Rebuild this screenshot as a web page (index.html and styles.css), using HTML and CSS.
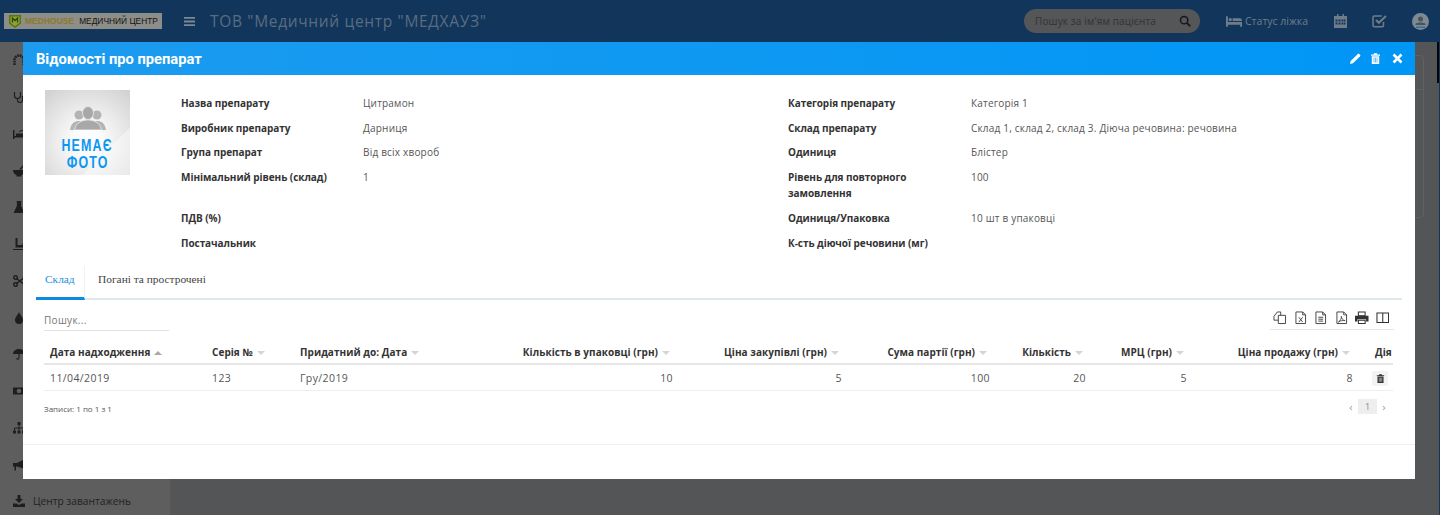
FILE: index.html
```html
<!DOCTYPE html>
<html lang="uk">
<head>
<meta charset="utf-8">
<title>Відомості про препарат</title>
<link rel="stylesheet" href="styles.css">
</head>
<body>
<div class="app">
  <header class="topbar">
    <div class="logo">
      <svg class="logo-mark" viewBox="1 1 12 13"><path d="M1 1h12v8.500l-6 4.500-6-4.500z" fill="#4f7a10"/><path d="M2.500 2.500h9v6.300l-4.500 3.400-4.500-3.400z" fill="#94a030"/><path d="M4.500 8.500V4l2.500 2.500L9.500 4v4.500" fill="none" stroke="#2c4a0c" stroke-width="1.300"/></svg>
      <span class="logo-brand">MEDHOUSE</span>
      <span class="logo-sub">МЕДИЧНИЙ ЦЕНТР</span>
    </div>
    <svg class="burger" viewBox="0 0 11 9"><path d="M0 0h11v1.800H0zM0 3.600h11v1.800H0zM0 7.200h11V9H0z" fill="#7b8895"/></svg>
    <div class="org">ТОВ "Медичний центр "МЕДХАУЗ"</div>
    <div class="pill">
      <span class="pill-text">Пошук за ім'ям пацієнта</span>
      <svg class="pill-icon" viewBox="0 0 14 14"><circle cx="6" cy="6" r="4.300" fill="none" stroke="#14181c" stroke-width="1.800"/><path d="M9.200 9.200L13 13" stroke="#14181c" stroke-width="2.200"/></svg>
    </div>
    <div class="status">
      <svg class="bed" viewBox="0 0 17 11"><path d="M0 0h2v6h15v5h-2V9H2v2H0z" fill="#6f7d8a"/><circle cx="4.500" cy="3.500" r="1.800" fill="#6f7d8a"/><path d="M7 2h7.500A2.500 2.500 0 0 1 17 4.500V5H7z" fill="#6f7d8a"/></svg>
      <span>Статус ліжка</span>
    </div>
    <svg class="cal" viewBox="0 0 13 14"><path d="M0 2h13v12H0z" fill="#6f7d8a"/><path d="M3 0h1.500v3H3zM8.500 0H10v3H8.500z" fill="#6f7d8a"/><path d="M1.500 5.500h2v2h-2zM4.500 5.500h2v2h-2zM7.500 5.500h2v2h-2zM10 5.500h1.500v2H10zM1.500 8.500h2v2h-2zM4.500 8.500h2v2h-2zM7.500 8.500h2v2h-2zM10 8.500h1.500v2H10z" fill="#12355b"/></svg>
    <svg class="chk" viewBox="0 0 15 14"><path d="M11.500 8v3.500a1.200 1.200 0 0 1-1.200 1.200H2.200A1.200 1.200 0 0 1 1 11.500V3.200A1.200 1.200 0 0 1 2.200 2h7.500" fill="none" stroke="#6f7d8a" stroke-width="1.500"/><path d="M4 6l2.800 2.800L14 2" fill="none" stroke="#6f7d8a" stroke-width="2"/></svg>
    <svg class="avatar" viewBox="0 0 17 17"><circle cx="8.500" cy="8.500" r="8.500" fill="#7c8a94"/><circle cx="8.500" cy="6" r="2.500" fill="#4d5358"/><path d="M3.500 11c1-2 9-2 10 0v1h-10z" fill="#4d5358"/><path d="M4 13.500h9V15H4z" fill="#3a6f9a"/></svg>
  </header>
  <div class="main">
    <nav class="sidebar">
      <div class="nav-item"><svg class="nav-icon" viewBox="0 0 12 12"><path d="M1.500 11V6a4.500 4.500 0 0 1 9 0v5" fill="none" stroke="#1e1e1e" stroke-width="2.400" stroke-dasharray="1.800 .7"/></svg></div>
      <div class="nav-item"><svg class="nav-icon" viewBox="0 0 12 12"><path d="M1.500 1v3.500a3 3 0 0 0 6 0V1M4.500 7.500V9a2.500 2.500 0 0 0 5 0V7" fill="none" stroke="#1e1e1e" stroke-width="1.200"/><circle cx="10" cy="6" r="1.300" fill="#1e1e1e"/></svg></div>
      <div class="nav-item"><svg class="nav-icon" viewBox="0 0 12 12"><path d="M0 2h1.500v6H12v3h-1.500V9.500h-9V11H0z" fill="#1e1e1e"/><path d="M3 5.500h8V8H3z" fill="#1e1e1e"/><path d="M6 3.500l5-1.500" stroke="#1e1e1e"/></svg></div>
      <div class="nav-item"><svg class="nav-icon" viewBox="0 0 12 12"><path d="M0 5h12c0 3-2 4.500-3.500 5v1.500h-5V10C2 9.500 0 8 0 5z" fill="#1e1e1e"/><path d="M7 4.500L11 0" stroke="#1e1e1e" stroke-width="1.400"/></svg></div>
      <div class="nav-item"><svg class="nav-icon" viewBox="0 0 12 12"><path d="M3.500 .5h5M4.500 .5v4.500L1.500 11.500h9L7.500 5V.5" fill="#1e1e1e" stroke="#1e1e1e" stroke-width="1.200"/></svg></div>
      <div class="nav-item"><svg class="nav-icon" viewBox="0 0 12 12"><path d="M0 11h12v1H0z" fill="#1e1e1e"/><path d="M2.500 0h2v7h5V5h2v4.500h-9z" fill="#1e1e1e"/></svg></div>
      <div class="nav-item"><svg class="nav-icon" viewBox="0 0 12 12"><circle cx="2.500" cy="2.500" r="1.800" fill="none" stroke="#1e1e1e" stroke-width="1.400"/><circle cx="2.500" cy="9.500" r="1.800" fill="none" stroke="#1e1e1e" stroke-width="1.400"/><path d="M3.500 3.500L12 10M3.500 8.500L12 2" stroke="#1e1e1e" stroke-width="1.500"/></svg></div>
      <div class="nav-item"><svg class="nav-icon" viewBox="0 0 12 12"><path d="M6 0c1 3 4 5 4 8a4 4 0 0 1-8 0c0-3 3-5 4-8z" fill="#1e1e1e"/></svg></div>
      <div class="nav-item"><svg class="nav-icon" viewBox="0 0 12 12"><path d="M0 6a6 5 0 0 1 12 0z" fill="#1e1e1e"/><path d="M6 6v4a1.200 1.200 0 0 1-2.400 0" fill="none" stroke="#1e1e1e" stroke-width="1.100"/></svg></div>
      <div class="nav-item"><svg class="nav-icon" viewBox="0 0 12 12"><path d="M0 2.500h12v7H0z" fill="#1e1e1e"/><circle cx="6" cy="6" r="2.300" fill="#5e5e5e"/></svg></div>
      <div class="nav-item"><svg class="nav-icon" viewBox="0 0 12 12"><path d="M4.500 0h3v3h-3zM0 8.500h3v3H0zM4.500 8.500h3v3h-3zM9 8.500h3v3H9z" fill="#1e1e1e"/><path d="M6 3v3M1.500 8.500V6h9v2.500M6 6v2.500" fill="none" stroke="#1e1e1e"/></svg></div>
      <div class="nav-item"><svg class="nav-icon" viewBox="0 0 12 12"><path d="M0 4h4L12 0v10L4 7.500H3v4H1.500v-4H0z" fill="#1e1e1e"/></svg></div>
      <div class="nav-item"><svg class="nav-icon" viewBox="0 0 12 12"><path d="M4.500 0h3v4h2.500L6 8 2 4h2.500zM0 8.500h3.500L6 10l2.500-1.500H12V12H0z" fill="#1e1e1e"/></svg><span class="nav-label">Центр завантажень</span></div>
    </nav>
    <div class="content">
      <div class="panel"><div class="panel-head"></div></div>
    </div>
    <div class="scrollbar"><div class="thumb"></div></div>
  </div>
</div>

<section class="modal">
  <div class="modal-head">
    <h1 class="modal-title">Відомості про препарат</h1>
    <div class="modal-actions">
      <svg class="act" viewBox="0 0 11 11"><path d="M0 11l.7-3L7.800.9a1 1 0 0 1 1.400 0l.9.9a1 1 0 0 1 0 1.400L3 10.300z" fill="#fff"/></svg>
      <svg class="act" viewBox="0 0 11 11"><path d="M1 1.500h9v1.300H1zM3.800.3h3.400v1.500H3.800zM1.800 3.300h7.400V11H1.800z" fill="#fff"/><path d="M4 4.500v5M5.500 4.500v5M7 4.500v5" stroke="#0b97f3" stroke-width=".6"/></svg>
      <svg class="act act-close" viewBox="0 0 11 11"><path d="M1.500 1.500l8 8M9.500 1.500l-8 8" stroke="#fff" stroke-width="2.600"/></svg>
    </div>
  </div>
  <div class="modal-body">
    <div class="summary">
      <div class="photo">
        <svg class="photo-people" viewBox="0 0 36 24"><circle cx="9" cy="9" r="4.500" fill="#b4b4b4"/><circle cx="27" cy="9" r="4.500" fill="#b4b4b4"/><path d="M0 24c1-8 6-9 9-9s8 1 9 9z" fill="#b4b4b4"/><path d="M18 24c1-8 6-9 9-9s8 1 9 9z" fill="#b4b4b4"/><ellipse cx="18" cy="7" rx="5.500" ry="6.500" fill="#a8a8a8" stroke="#e2e2e2"/><path d="M4.500 24c1-8 9-10 13.500-10s12.500 2 13.500 10z" fill="#a8a8a8" stroke="#e2e2e2"/></svg>
        <span class="photo-text">НЕМАЄ</span>
        <span class="photo-text">ФОТО</span>
      </div>
      <dl class="facts">
        <dt>Назва препарату</dt><dd>Цитрамон</dd><dt>Категорія препарату</dt><dd>Категорія 1</dd>
        <dt>Виробник препарату</dt><dd>Дарниця</dd><dt>Склад препарату</dt><dd>Склад 1, склад 2, склад 3. Діюча речовина: речовина</dd>
        <dt>Група препарат</dt><dd>Від всіх хвороб</dd><dt>Одиниця</dt><dd>Блістер</dd>
        <dt>Мінімальний рівень (склад)</dt><dd>1</dd><dt>Рівень для повторного замовлення</dt><dd>100</dd>
        <dt>ПДВ (%)</dt><dd></dd><dt>Одиниця/Упаковка</dt><dd>10 шт в упаковці</dd>
        <dt>Постачальник</dt><dd></dd><dt>К-сть діючої речовини (мг)</dt><dd></dd>
      </dl>
    </div>
    <div class="tabs">
      <div class="tab tab-active">Склад</div>
      <div class="tab">Погані та прострочені</div>
    </div>
    <div class="toolbar">
      <div class="search">Пошук...</div>
      <div class="tools">
        <svg class="tool" viewBox="0 0 14 14"><path d="M5.500 4.500H13v8.500H5.500zM1 5.500L4.500 1H8v3.500M5.500 9.500H1V5.500" fill="none" stroke="#444" stroke-width="1"/></svg>
        <svg class="tool" viewBox="0 0 14 14"><path d="M2 1h7l3 3v9H2z" fill="none" stroke="#444" stroke-width="1"/><path d="M9 1v3h3M5 6.500l4 5M9 6.500l-4 5" fill="none" stroke="#444" stroke-width="1"/></svg>
        <svg class="tool" viewBox="0 0 14 14"><path d="M2 1h7l3 3v9H2z" fill="none" stroke="#444" stroke-width="1"/><path d="M9 1v3h3M4.500 6.500h5M4.500 8.500h5M4.500 10.500h5" fill="none" stroke="#444" stroke-width="1"/></svg>
        <svg class="tool" viewBox="0 0 14 14"><path d="M2 1h7l3 3v9H2z" fill="none" stroke="#444" stroke-width="1"/><path d="M9 1v3h3M3.500 11.500C6 10 7 7 6.500 5.500 7 8 8 9.500 10.500 10 8 9.500 5.500 10 3.500 11.500z" fill="none" stroke="#444" stroke-width=".9"/></svg>
        <svg class="tool" viewBox="0 0 14 14"><path d="M3.500 1h7v4h-7zM3.500 9.500h7V13h-7z" fill="none" stroke="#333" stroke-width="1.100"/><path d="M0 5h14v6h-2.500V8.500h-9V11H0z" fill="#333"/></svg>
        <svg class="tool" viewBox="0 0 14 14"><path d="M1 2h12v10H1zM7 2v10" fill="none" stroke="#333" stroke-width="1.100"/></svg>
      </div>
    </div>
    <table class="grid">
      <colgroup>
        <col class="c1"><col class="c2"><col class="c3"><col class="c4"><col class="c5"><col class="c6"><col class="c7"><col class="c8"><col class="c9"><col class="c10">
      </colgroup>
      <thead>
        <tr>
          <th><span class="th-text">Дата надходження</span><span class="sort sort-up"></span></th>
          <th><span class="th-text">Серія №</span><span class="sort"></span></th>
          <th><span class="th-text">Придатний до: Дата</span><span class="sort"></span></th>
          <th class="num"><span class="th-text">Кількість в упаковці (грн)</span><span class="sort"></span></th>
          <th class="num"><span class="th-text">Ціна закупівлі (грн)</span><span class="sort"></span></th>
          <th class="num"><span class="th-text">Сума партії (грн)</span><span class="sort"></span></th>
          <th class="num"><span class="th-text">Кількість</span><span class="sort"></span></th>
          <th class="num"><span class="th-text">МРЦ (грн)</span><span class="sort"></span></th>
          <th class="num"><span class="th-text">Ціна продажу (грн)</span><span class="sort"></span></th>
          <th class="clip">Дія</th>
        </tr>
      </thead>
      <tbody>
        <tr>
          <td>11/04/2019</td>
          <td>123</td>
          <td>Гру/2019</td>
          <td class="num">10</td>
          <td class="num">5</td>
          <td class="num">100</td>
          <td class="num">20</td>
          <td class="num">5</td>
          <td class="num">8</td>
          <td class="cell-act"><span class="del"><svg class="del-icon" viewBox="0 0 11 11"><path d="M1 1.500h9v1.300H1zM3.800.3h3.400v1.500H3.800zM1.800 3.300h7.400V11H1.800z" fill="#333"/><path d="M4 4.500v5M5.500 4.500v5M7 4.500v5" stroke="#f3f3f3" stroke-width=".6"/></svg></span></td>
        </tr>
      </tbody>
    </table>
    <div class="table-foot">
      <div class="info">Записи: 1 по 1 з 1</div>
      <div class="pager"><span class="pg">‹</span><span class="pg pg-current">1</span><span class="pg">›</span></div>
    </div>
  </div>
  <div class="modal-foot"></div>
</section>
</body>
</html>
```
FILE: styles.css
```css
* { box-sizing: border-box; }
html, body { margin: 0; height: 515px; overflow: hidden; }
body { font-family: "Open Sans", "Liberation Sans", sans-serif; background: #545556; color: #3a3a3a; }

.app { display: flex; flex-direction: column; height: 515px; }

.topbar { height: 42px; flex: none; background: #12355b; display: flex; align-items: center; padding-left: 4px; }
.logo { width: 158px; height: 16px; background: #8d8d89; display: flex; align-items: center; padding-left: 5px; white-space: nowrap; }
.logo-mark { width: 12px; height: 13px; flex: none; }
.logo-brand { font: bold 8.500px "Liberation Sans", sans-serif; color: #8c7a28; margin-left: 4px; }
.logo-sub { font: 8.400px "Liberation Sans", sans-serif; color: #14140f; margin-left: 5px; }
.burger { width: 11px; height: 9px; margin-left: 22px; flex: none; }
.org { margin-left: 15px; font-size: 15.500px; letter-spacing: .67px; color: #5a6c80; white-space: nowrap; flex: 1; }
.pill { width: 176px; height: 24px; border-radius: 12px; background: #555657; display: flex; align-items: center; justify-content: space-between; padding: 0 9px 0 11px; margin-right: 26px; }
.pill-text { font-size: 10px; color: #333; letter-spacing: .15px; white-space: nowrap; }
.pill-icon { width: 12px; height: 12px; }
.status { display: flex; align-items: center; gap: 3px; width: 82px; font-size: 10.500px; color: #6f7d8a; white-space: nowrap; }
.bed { width: 17px; height: 11px; }
.cal { width: 13px; height: 14px; margin-left: 26px; }
.chk { width: 15px; height: 14px; margin-left: 25px; }
.avatar { width: 17px; height: 17px; margin-left: 25px; margin-right: 11px; }

.main { flex: 1; display: flex; min-height: 0; }
.sidebar { width: 170px; flex: none; background: #5e5e5e; display: flex; flex-direction: column; }
.nav-item { height: 36.750px; flex: none; display: flex; align-items: center; padding-left: 13px; }
.nav-icon { width: 12px; height: 12px; flex: none; }
.nav-label { margin-left: 8px; font-size: 10.200px; color: #222; white-space: nowrap; }
.content { flex: 1; padding: 13px 13px 0 20px; }
.panel { height: 163px; border: 1px solid #606162; border-radius: 4px; }
.panel-head { height: 34px; border-bottom: 1px solid #606162; }
.scrollbar { width: 3px; flex: none; border-right: 1px solid #12355b; }
.thumb { height: 41px; background: #050505; width: 2px; }

.modal { position: absolute; left: 23px; top: 42px; width: 1392px; height: 437px; background: #fff; display: flex; flex-direction: column; }
.modal-head { height: 33px; flex: none; background: linear-gradient(90deg, #1c9bef, #0096f6); display: flex; align-items: center; justify-content: space-between; padding: 1px 12px 0 13px; }
.modal-title { margin: 0; font: 700 14.700px Roboto, sans-serif; color: #fff; }
.modal-actions { display: flex; align-items: center; gap: 9px; margin-top: -1px; }
.act { width: 11px; height: 11px; }
.act-close { margin-left: 2px; }
.modal-body { flex: 1; padding: 14px 13px 0 13px; border-top: 1px solid #fff; }

.summary { display: flex; padding-left: 8px; height: 176px; }
.photo { width: 85px; height: 85px; margin-left: 1px; flex: none; background: linear-gradient(135deg, transparent 72%, rgba(255,255,255,.4) 72%), radial-gradient(circle at 50% 60%, #fcfcfc 20%, #d2d2d2 95%); display: flex; flex-direction: column; align-items: center; padding-top: 16px; }
.photo-people { width: 36px; height: 24px; margin-bottom: 7px; flex: none; }
.photo-text { font: 700 17px/17px "Liberation Sans", sans-serif; letter-spacing: 1.600px; color: #0a97f2; transform: scaleX(.73); white-space: nowrap; }
.facts { margin: 1px 0 0 51px; display: grid; grid-template-columns: 182px 425px 183px 1fr; align-content: start; flex: 1; }
.facts dt, .facts dd { margin: 0; padding: 4px 0; font-size: 10px; line-height: 16.600px; }
.facts dt { font-weight: 700; color: #333; padding-right: 20px; letter-spacing: -.05px; }
.facts dd { color: #555; letter-spacing: .2px; }

.tabs { display: flex; height: 34px; border-bottom: 2px solid #dde8ec; font: 11.400px "Liberation Serif", serif; color: #444; }
.tab { padding: 7px 13px 0; white-space: nowrap; height: 34px; }
.tab-active { color: #1a8fdc; padding: 7px 9px 0; width: 49px; border-bottom: 3px solid #0a8be0; border-right: 1px solid #eef2f4; }

.toolbar { display: flex; justify-content: space-between; margin: 11px 8px 0; height: 20px; }
.search { width: 125px; height: 20px; border-bottom: 1px solid #e2e2e2; font-size: 10px; color: #777; letter-spacing: .3px; line-height: 19px; }
.tools { width: 124px; height: 19px; border-bottom: 1px solid #e6e6e6; display: flex; justify-content: flex-end; gap: 7px; padding-right: 5px; }
.tool { width: 13.500px; height: 13.500px; }

.grid { table-layout: fixed; width: 1349px; margin: 11px 8px 0; border-collapse: collapse; font-size: 10px; }
.c1 { width: 162px; } .c2 { width: 88px; } .c3 { width: 206px; } .c4 { width: 179px; } .c5 { width: 169px; }
.c6 { width: 148px; } .c7 { width: 96px; } .c8 { width: 101px; } .c9 { width: 166px; } .c10 { width: 34px; }
.grid th { height: 22px; padding: 0 6px 2px; font-weight: 700; text-align: left; color: #333; border-bottom: 2px solid #e6e6e6; white-space: nowrap; overflow: hidden; letter-spacing: .05px; }
.grid th.num { text-align: right; padding-right: 9px; }
.grid th.clip { padding-left: 16px; padding-right: 0; }
.grid td { height: 26px; padding: 1px 6px 0; color: #555; border-bottom: 1px solid #eee; font-size: 10.500px; letter-spacing: .4px; }
.grid td.num { text-align: right; }
.cell-act { text-align: center; }
.sort { display: inline-block; width: 0; height: 0; margin-left: 4px; border-left: 4px solid transparent; border-right: 4px solid transparent; border-top: 4px solid #d5d5d5; vertical-align: 1px; }
.sort-up { border-top: 0; border-bottom: 4px solid #a8a8a8; }
.del { display: inline-flex; width: 16px; height: 15px; background: #f3f3f3; align-items: center; justify-content: center; border-radius: 2px; vertical-align: middle; margin-left: 7px; }
.del-icon { width: 9px; height: 9px; }

.table-foot { display: flex; justify-content: space-between; align-items: center; margin: 8px 14px 0 8px; height: 16px; }
.info { font-size: 8px; color: #555; padding-top: 4px; }
.pager { display: flex; align-items: center; font-size: 9px; color: #999; }
.pg { width: 8px; text-align: center; font-size: 11px; }
.pg-current { width: 19px; height: 15px; background: #eee; font-size: 9px; line-height: 15px; color: #888; margin: 0 3px; }

.modal-foot { height: 35px; flex: none; border-top: 1px solid #f0f0f0; }
```
